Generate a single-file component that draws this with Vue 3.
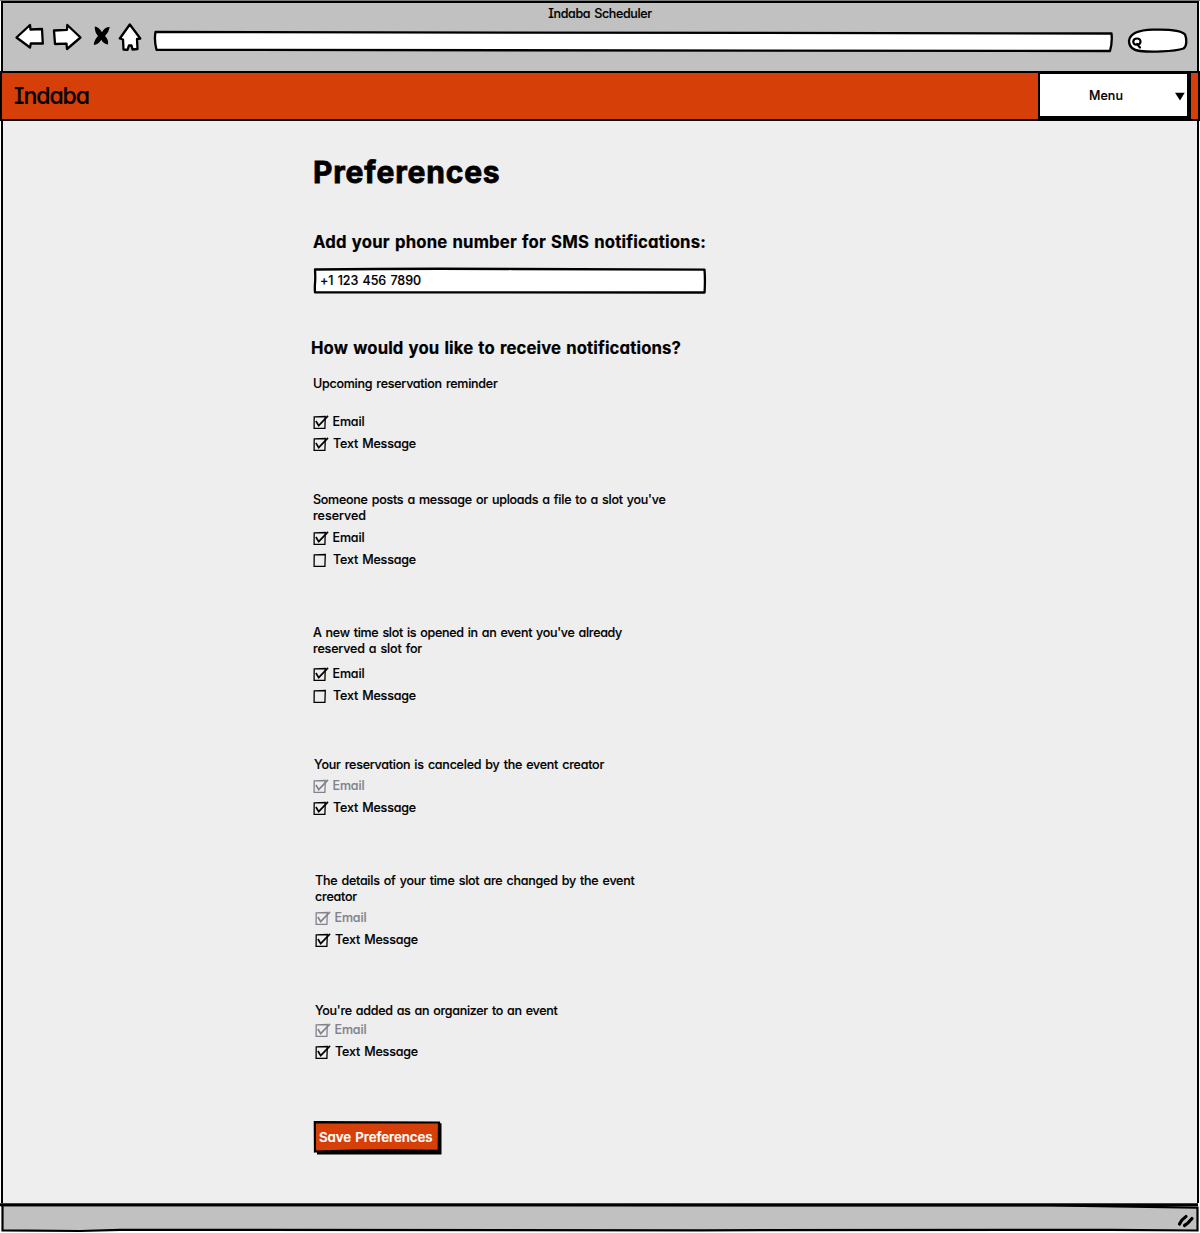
<script setup>
// Spreads a line's letters so that it fills the given width in pixels.
const vFit = {
  mounted(el, { value }) {
    const count = el.textContent.length
    const natural = el.getBoundingClientRect().width
    el.style.letterSpacing = `${(value - natural) / count}px`
  },
}

const groups = [
  { id: 1, lines: [['Upcoming reservation reminder', 184.5]], email: 'on', text: true },
  { id: 2, lines: [["Someone posts a message or uploads a file to a slot you've", 352.5], ['reserved', 53]], email: 'on', text: false },
  { id: 3, lines: [["A new time slot is opened in an event you've already", 309], ['reserved a slot for', 109]], email: 'on', text: false },
  { id: 4, lines: [['Your reservation is canceled by the event creator', 290]], email: 'locked', text: true },
  { id: 5, lines: [['The details of your time slot are changed by the event', 319.5], ['creator', 42]], email: 'locked', text: true },
  { id: 6, lines: [["You're added as an organizer to an event", 242.5]], email: 'locked', text: true },
]
</script>

<template>
  <div class="window">
    <header class="chrome">
      <div class="title"><span v-fit="103.5">Indaba Scheduler</span></div>
      <div class="tools">
        <svg class="nav" width="150" height="40" viewBox="0 0 150 40">
          <g fill="#fff" stroke="#000" stroke-width="2.3" stroke-linejoin="round">
            <path d="M16.500 17.500 L30 5 L30.500 9.500 L42 9 L42.800 23.500 L30.800 23.500 L30 27.500 Z" />
            <path d="M54 10.500 L67 9.800 L67.300 5 L80.500 17.500 L67 29 L66.500 23.700 L55 24 Z" />
            <path d="M129.800 4.500 L140.300 18.500 L137 19 L137.500 29 L132.500 29.500 L131.500 25.500 L129 25.500 L127.500 29.800 L123.500 29.500 L123 19.500 L119.800 18.500 Z" />
          </g>
          <path d="M94.800 6.500 Q99 7 102 12.200 Q104.500 7 109.800 7 Q109 12 105 16 Q109 20 108 24.500 Q103.500 24 101.300 19.700 Q98.500 24.500 93.800 25 Q94 20 98 16 Q94.500 12 94.800 6.500 Z" />
        </svg>
        <svg class="address" width="961" height="24" viewBox="0 0 961 24">
          <path d="M2.500 3 L958.500 4.500 Q959.500 13 957 22 L3.500 20.800 Q1 11 2.500 3 Z" fill="#fff" stroke="#000" stroke-width="2.300" stroke-linejoin="round" />
        </svg>
        <svg class="search" width="62" height="27" viewBox="0 0 62 27">
          <path d="M2 14 C3 6 11 3 26 2.700 C42 2.200 54 3 58 7.500 C60 12 60 19 56.500 21.500 C47 25 22 25 13 24 C5 23 2 19 2 14 Z" fill="#fff" stroke="#000" stroke-width="2.300" />
          <path d="M10 11.500 C5.300 11.500 5 17.500 9.500 17.700 C14.500 18 15 11.500 10 11.500 M10 17 L13 20.500" fill="none" stroke="#000" stroke-width="2.200" stroke-linecap="round" />
        </svg>
      </div>
    </header>

    <nav class="bar">
      <span v-fit="75" class="brand">Indaba</span>
      <div class="menu">
        <span v-fit="34" class="caption">Menu</span>
        <svg class="caret" width="10" height="9" viewBox="0 0 10 9"><path d="M0 .8 H9.700 L5 8.500 Z" /></svg>
      </div>
    </nav>

    <main class="page">
      <h1><span v-fit="187.5">Preferences</span></h1>
      <h2><span v-fit="393">Add your phone number for SMS notifications:</span></h2>
      <div class="field">
        <svg class="outline" width="394" height="28" viewBox="0 0 394 28">
          <path d="M2 2.500 Q100 1.300 200 2 T391.500 2.700 Q392.300 12 391.600 25.500 Q200 26 2 25.300 Q1.600 20 2.200 14 Q2.400 8 2 2.500 Z" fill="#fff" stroke="#000" stroke-width="2.300" stroke-linejoin="round" />
        </svg>
        <span v-fit="101" class="value">+1 123 456 7890</span>
      </div>
      <h2 class="how"><span v-fit="370">How would you like to receive notifications?</span></h2>

      <section v-for="g in groups" :key="g.id" :class="['group', `g${g.id}`]">
        <div class="question">
          <div v-for="[line, width] in g.lines" :key="line" class="line"><span v-fit="width">{{ line }}</span></div>
        </div>
        <div :class="['option', { locked: g.email === 'locked' }]">
          <svg width="16" height="15" viewBox="0 0 16 15">
            <path class="box" d="M1.200 1.900 L12.300 1.500 L11.900 13.300 L1.100 13.400 Z" />
            <path class="tick" d="M2.900 6 L5.700 10.700 L15 .8" />
          </svg>
          <span v-fit="32" class="mail">Email</span>
        </div>
        <div class="option">
          <svg width="16" height="15" viewBox="0 0 16 15">
            <path class="box" d="M1.200 1.900 L12.300 1.500 L11.900 13.300 L1.100 13.400 Z" />
            <path v-if="g.text" class="tick" d="M2.900 6 L5.700 10.700 L15 .8" />
          </svg>
          <span v-fit="83" class="sms">Text Message</span>
        </div>
      </section>

      <div class="save">
        <svg class="outline" width="130" height="36" viewBox="0 0 130 36">
          <path d="M4 3 L128.500 3.200 V34.500 H4 Z" />
          <path d="M1.800 2.200 L126 2.500 L125.700 30.800 Q65 29.500 2 31.500 Z" fill="#d73f09" stroke="#000" stroke-width="2.200" />
        </svg>
        <span v-fit="113.5" class="label">Save Preferences</span>
      </div>
    </main>

    <footer class="status">
      <svg width="1200" height="30" viewBox="0 0 1200 30">
        <path d="M2.500 2 L1050 2.500 L1197.500 4.700 V27.500 L1110 26.800 L700 27.300 L120 26.800 L80 28 L2.500 27.300 Z" fill="#c1c1c1" stroke="#000" stroke-width="2.200" />
        <path d="M0 1.800 H1198" stroke="#000" stroke-width="3" />
        <path d="M1179.500 21 Q1182 16 1186 13.500 M1184.500 22.500 Q1188 20.500 1192 15.500" fill="none" stroke="#000" stroke-width="3.200" stroke-linecap="round" />
      </svg>
    </footer>
  </div>
</template>

<style>
body { margin: 0; background: #fff; }
</style>

<style scoped>
.window {
  box-sizing: border-box;
  width: 1200px;
  height: 1233px;
  display: flex;
  flex-direction: column;
  overflow: hidden;
  border-top: 1px solid #7c807c;
  color: #000;
  font-family: Inter, Lato, sans-serif;
  font-feature-settings: "cv11" 1, "cv08" 1;
  font-size: 12.500px;
  font-weight: 500;
  line-height: 16px;
  white-space: nowrap;
  word-spacing: 1px;
  -webkit-text-stroke: .15px currentColor;
}
span { display: inline-block; }
svg { display: block; flex: none; }
.chrome {
  box-sizing: border-box;
  height: 70px;
  margin: 0 1px;
  border: 2px solid #000;
  border-bottom: 0;
  background: #c1c1c1;
}
.title { height: 21px; padding-top: 3px; text-align: center; box-sizing: border-box; }
.tools { display: flex; align-items: flex-start; margin-left: -3px; }
.nav { margin-top: -4px; }
.address { margin: 5px 0 0 3px; }
.search { margin: 3px 0 0 12.500px; }
.bar {
  box-sizing: border-box;
  height: 50px;
  border: 2px solid #000;
  background: #d73f09;
  display: flex;
  justify-content: space-between;
  padding-left: 12px;
}
.brand { font-size: 23px; line-height: 46px; font-weight: 500; }
.menu {
  box-sizing: border-box;
  width: 153px;
  height: 47px;
  margin-right: 7px;
  border: solid #000;
  border-width: 1px 4px 4px 2px;
  background: #fff;
  display: flex;
  align-items: center;
  padding: 0 2px 0 49px;
  justify-content: space-between;
}
.caption { margin-top: 2px; }
.caret { margin-top: 2px; }
.page {
  flex: none;
  box-sizing: border-box;
  height: 1082px;
  margin: 0 1px;
  padding-left: 310px;
  border: solid #000;
  border-width: 0 2px;
  background: #eee;
}
h1, h2 { margin: 0; font-weight: 700; }
h1 { padding-top: 31px; font-size: 30px; line-height: 40px; -webkit-text-stroke: .8px #000; }
h2 { margin-top: 38px; font-size: 16.700px; line-height: 24px; -webkit-text-stroke: .2px #000; }
.field, .save { position: relative; }
.outline { position: absolute; inset: 0 auto auto 0; }
.field { width: 394px; height: 28px; margin-top: 13px; }
.value { position: relative; margin: 6px 0 0 7px; }
.how { margin: 41px 0 0 -2px; }
.g1 { margin-top: 16px; }
.g2 { margin-top: 37px; }
.g3 { margin-top: 54px; }
.g4 { margin-top: 50px; }
.g5 { margin-top: 54px; }
.g6 { margin-top: 52px; }
.g1 .question { margin-bottom: 19px; }
.g2 .question { margin-bottom: 3px; }
.g3 .question { margin-bottom: 6px; }
.g4 .question { margin: 0 0 2px 1px; }
.g5 .question { margin-bottom: 2px; }
.g5, .g6 { margin-left: 2px; }
.line { height: 16px; }
.option { display: flex; align-items: center; height: 22px; gap: 3px; }
.option span { margin-bottom: 1px; }
.mail { margin-left: .5px; }
.sms { margin-left: 1px; }
.box, .tick { fill: none; stroke: #000; }
.box { stroke-width: 1.300; }
.tick { stroke-width: 1.700; }
.locked { color: #82828c; }
.locked .box, .locked .tick { stroke: #82828c; }
.save { width: 130px; height: 36px; margin-top: 57px; }
.label { position: relative; margin: 9px 0 0 6px; color: #fff; font-size: 13.300px; font-weight: 600; }
.status { height: 30px; }
</style>
